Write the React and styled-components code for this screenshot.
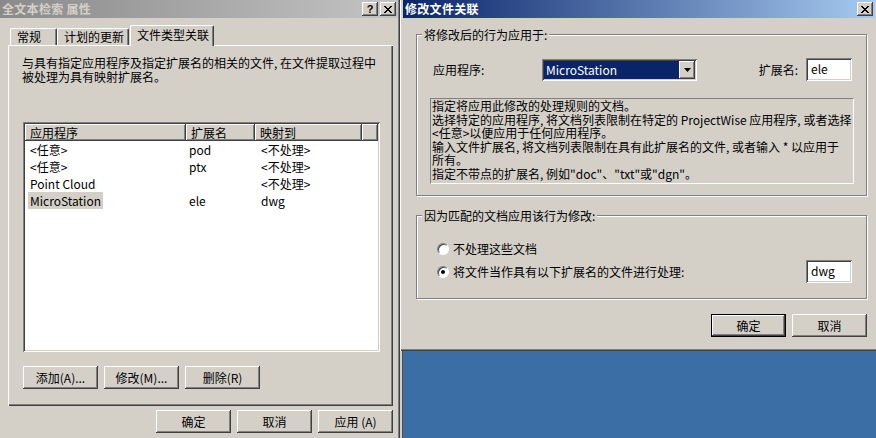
import React from 'react'
import styled, { createGlobalStyle } from 'styled-components'

const GlobalStyle = createGlobalStyle`
  html, body {
    margin: 0;
    padding: 0;
    background: #d4d0c8;
  }
  body {
    font-family: "Noto Sans CJK SC", "Liberation Sans", sans-serif;
    font-size: 12px;
    color: #000;
  }
  * { box-sizing: border-box; }
`

const raised = `
  background: #d4d0c8;
  box-shadow: inset -1px -1px #404040, inset 1px 1px #fff, inset -2px -2px #808080, inset 2px 2px #d4d0c8;
`
const sunken = `
  background: #fff;
  box-shadow: inset 1px 1px #808080, inset -1px -1px #fff, inset 2px 2px #404040, inset -2px -2px #d4d0c8;
`

const Screen = styled.div`
  display: flex;
  width: 876px;
  height: 438px;
  overflow: hidden;
`

const LeftWindow = styled.div`
  width: 400px;
  flex: none;
  display: flex;
  flex-direction: column;
  background: #d4d0c8;
  box-shadow: inset -1px 0 #404040, inset -2px 0 #808080;
`

const TitleBar = styled.div`
  height: 18px;
  flex: none;
  display: flex;
  align-items: center;
  gap: 2px;
  padding: 0 2px 0 2px;
  margin-right: ${p => p.$mr || 0}px;
  background: linear-gradient(90deg, ${p => p.$from}, ${p => p.$to});
  color: ${p => p.$color};
`

const TitleText = styled.div`
  flex: 1;
  font-weight: bold;
  white-space: nowrap;
  line-height: 18px;
  letter-spacing: 0.3px;
`

const CaptionButton = styled.div`
  ${raised}
  width: 16px;
  height: 14px;
  display: flex;
  align-items: center;
  justify-content: center;
  color: #000;
  font-family: "Liberation Sans", sans-serif;
  font-weight: bold;
  font-size: 11px;
  line-height: 14px;
`

const LeftBody = styled.div`
  flex: 1;
  padding: 7px 7px 0 8px;
`

const TabStrip = styled.div`
  height: 20px;
  display: flex;
  align-items: flex-end;
  padding-left: 2px;
`

const Tab = styled.div`
  position: relative;
  z-index: 1;
  width: ${p => p.$w}px;
  height: ${p => (p.$active ? 21 : 17)}px;
  margin: ${p => (p.$active ? '0 0 -1px 1px' : '0')};
  padding-left: 6px;
  background: #d4d0c8;
  border-top: 1px solid #fff;
  border-left: 1px solid #fff;
  border-right: 1px solid #404040;
  border-radius: 2px 2px 0 0;
  box-shadow: inset -1px 0 #808080;
  line-height: ${p => (p.$active ? 18 : 16)}px;
  white-space: nowrap;
`

const TabPanel = styled.div`
  height: 361px;
  padding: 11px 12px 0 14px;
  box-shadow: inset 1px 1px #fff, inset -1px -1px #404040, inset -2px -2px #808080;
`

const Description = styled.div`
  line-height: 14px;
  white-space: nowrap;
`

const ListView = styled.div`
  ${sunken}
  margin: 38px 0 0 1px;
  width: 357px;
  height: 230px;
  padding: 2px;
  overflow: hidden;
`

const Grid = styled.div`
  display: grid;
  grid-template-columns: 161px 69px 107px 1fr;
  height: 17px;
  line-height: 17px;
  white-space: nowrap;
`

const HeaderCell = styled.div`
  ${raised}
  padding-left: 5px;
`

const Cell = styled.div`
  padding-left: ${p => p.$pl || 4}px;
`

const CellText = styled.span`
  display: inline-block;
  padding: 0 2px;
  background: ${p => (p.$selected ? '#d4d0c8' : 'transparent')};
`

const ButtonRow = styled.div`
  display: flex;
  gap: 6px;
  justify-content: ${p => p.$justify || 'flex-start'};
  margin: ${p => p.$margin || '0'};
`

const Button = styled.div`
  ${raised}
  width: ${p => p.$w || 75}px;
  height: 23px;
  display: flex;
  align-items: center;
  justify-content: center;
  white-space: nowrap;
  ${p => p.$default && 'outline: 1px solid #000; outline-offset: -1px; box-shadow: inset -2px -2px #404040, inset 2px 2px #fff, inset -3px -3px #808080;'}
`

const RightColumn = styled.div`
  flex: 1;
  display: flex;
  flex-direction: column;
  background: #d4d0c8;
`

const RightWindow = styled.div`
  height: 351px;
  flex: none;
  padding: 0 1px 0 3px;
  background: #d4d0c8;
  box-shadow: inset 1px 0 #fff, inset 0 -1px #404040, inset 0 -2px #808080;
`

const RightBody = styled.div`
  padding: 16px 8px 0 13px;
`

const GroupBox = styled.div`
  border: 1px solid #808080;
  box-shadow: inset 1px 1px #fff, 1px 1px #fff;
  padding: 0 12px ${p => p.$pb}px 13px;
  margin-top: ${p => p.$mt || 0}px;
`

const Legend = styled.div`
  width: fit-content;
  height: 15px;
  margin: -8px 0 0 -8px;
  padding: 0 2px;
  background: #d4d0c8;
  line-height: 15px;
  white-space: nowrap;
`

const FieldRow = styled.div`
  display: flex;
  align-items: center;
  height: 23px;
  margin-top: ${p => p.$mt || 0}px;
  padding: 0 2px 0 ${p => p.$pl || 3}px;
  white-space: nowrap;
`

const FieldLabel = styled.div`
  width: ${p => (p.$w ? `${p.$w}px` : 'auto')};
  margin-left: ${p => (p.$push ? 'auto' : '0')};
  margin-right: ${p => p.$mr || 0}px;
`

const Combo = styled.div`
  ${sunken}
  width: 155px;
  height: 22px;
  padding: 2px;
  display: flex;
`

const ComboValue = styled.div`
  flex: 1;
  background: #0a246a;
  color: #fff;
  line-height: 18px;
  padding-left: 2px;
`

const ComboArrow = styled.div`
  ${raised}
  width: 16px;
  display: flex;
  align-items: center;
  justify-content: center;
`

const TextInput = styled.div`
  ${sunken}
  width: 46px;
  height: 23px;
  margin-left: ${p => (p.$push ? 'auto' : '0')};
  padding: 0 5px;
  line-height: 22px;
`

const InfoBox = styled.div`
  height: 86px;
  margin-top: 17px;
  border-top: 1px solid #808080;
  border-left: 1px solid #808080;
  border-right: 1px solid #fff;
  border-bottom: 1px solid #fff;
  padding-left: 1px;
  line-height: 13.5px;
  white-space: nowrap;
  overflow: hidden;
`

const Radio = styled.span`
  width: 12px;
  height: 12px;
  flex: none;
  border-radius: 50%;
  background: #fff;
  border: 1px solid;
  border-color: #808080 #fff #fff #808080;
  box-shadow: inset 1px 1px #404040;
  display: flex;
  align-items: center;
  justify-content: center;
  &::after {
    content: '';
    width: 4px;
    height: 4px;
    border-radius: 50%;
    background: ${p => (p.$checked ? '#000' : 'transparent')};
  }
`

const RadioLabel = styled.span`
  margin-left: 4px;
`

const Desktop = styled.div`
  flex: 1;
  margin-left: 2px;
  background: #3a6ea5;
  box-shadow: inset 1px 0 #505050;
`

const CloseGlyph = () => (
  <svg width="8" height="7" viewBox="0 0 8 7">
    <path d="M0 0h2v1h-2zM6 0h2v1h-2zM1 1h2v1h-2zM5 1h2v1h-2zM2 2h4v1h-4zM3 3h2v1h-2zM2 4h4v1h-4zM1 5h2v1h-2zM5 5h2v1h-2zM0 6h2v1h-2zM6 6h2v1h-2z" fill="#000" />
  </svg>
)

const rows = [
  { app: '<任意>', ext: 'pod', map: '<不处理>' },
  { app: '<任意>', ext: 'ptx', map: '<不处理>' },
  { app: 'Point Cloud', ext: '', map: '<不处理>' },
  { app: 'MicroStation', ext: 'ele', map: 'dwg', selected: true }
]

const infoLines = [
  '指定将应用此修改的处理规则的文档。',
  '选择特定的应用程序, 将文档列表限制在特定的 ProjectWise 应用程序, 或者选择',
  '<任意>以便应用于任何应用程序。',
  '输入文件扩展名, 将文档列表限制在具有此扩展名的文件, 或者输入 * 以应用于',
  '所有。',
  '指定不带点的扩展名, 例如"doc"、"txt"或"dgn"。'
]

export default function App () {
  return (
    <Screen>
      <GlobalStyle />
      <LeftWindow>
        <TitleBar $from='#8a8a8a' $to='#c4c4c4' $color='#d4d0c8' $mr={2}>
          <TitleText>全文本检索  属性</TitleText>
          <CaptionButton>?</CaptionButton>
          <CaptionButton><CloseGlyph /></CaptionButton>
        </TitleBar>
        <LeftBody>
          <TabStrip>
            <Tab $w={47}>常规</Tab>
            <Tab $w={72}>计划的更新</Tab>
            <Tab $w={84} $active>文件类型关联</Tab>
          </TabStrip>
          <TabPanel>
            <Description>与具有指定应用程序及指定扩展名的相关的文件, 在文件提取过程中</Description>
            <Description>被处理为具有映射扩展名。</Description>
            <ListView>
              <Grid>
                <HeaderCell>应用程序</HeaderCell>
                <HeaderCell>扩展名</HeaderCell>
                <HeaderCell>映射到</HeaderCell>
                <HeaderCell />
              </Grid>
              {rows.map((r, i) => (
                <Grid key={i}>
                  <Cell $pl={3}><CellText $selected={r.selected}>{r.app}</CellText></Cell>
                  <Cell $pl={1}><CellText>{r.ext}</CellText></Cell>
                  <Cell $pl={4}><CellText>{r.map}</CellText></Cell>
                  <Cell />
                </Grid>
              ))}
            </ListView>
            <ButtonRow $margin='14px 0 0 1px'>
              <Button>添加(A)...</Button>
              <Button>修改(M)...</Button>
              <Button>删除(R)</Button>
            </ButtonRow>
          </TabPanel>
          <ButtonRow $justify='flex-end' $margin='4px 0 0 0'>
            <Button>确定</Button>
            <Button>取消</Button>
            <Button>应用 (A)</Button>
          </ButtonRow>
        </LeftBody>
      </LeftWindow>

      <RightColumn>
        <RightWindow>
          <TitleBar $from='#0a246a' $to='#a6caf0' $color='#fff'>
            <TitleText>修改文件关联</TitleText>
            <CaptionButton><CloseGlyph /></CaptionButton>
          </TitleBar>
          <RightBody>
            <GroupBox $pb={11}>
              <Legend>将修改后的行为应用于:</Legend>
              <FieldRow $mt={16}>
                <FieldLabel $w={109}>应用程序:</FieldLabel>
                <Combo>
                  <ComboValue>MicroStation</ComboValue>
                  <ComboArrow>
                    <svg width="7" height="4" viewBox="0 0 7 4"><path d="M0 0h7l-3.5 4z" fill="#000" /></svg>
                  </ComboArrow>
                </Combo>
                <FieldLabel $push $mr={8}>扩展名:</FieldLabel>
                <TextInput>ele</TextInput>
              </FieldRow>
              <InfoBox>
                {infoLines.map((l, i) => <div key={i}>{l}</div>)}
              </InfoBox>
            </GroupBox>
            <GroupBox $mt={19} $pb={15}>
              <Legend>因为匹配的文档应用该行为修改:</Legend>
              <FieldRow $mt={14} $pl={7}>
                <Radio />
                <RadioLabel>不处理这些文档</RadioLabel>
              </FieldRow>
              <FieldRow $pl={7}>
                <Radio $checked />
                <RadioLabel>将文件当作具有以下扩展名的文件进行处理:</RadioLabel>
                <TextInput $push>dwg</TextInput>
              </FieldRow>
            </GroupBox>
            <ButtonRow $justify='flex-end' $margin='15px 0 0 0'>
              <Button $default>确定</Button>
              <Button>取消</Button>
            </ButtonRow>
          </RightBody>
        </RightWindow>
        <Desktop />
      </RightColumn>
    </Screen>
  )
}
